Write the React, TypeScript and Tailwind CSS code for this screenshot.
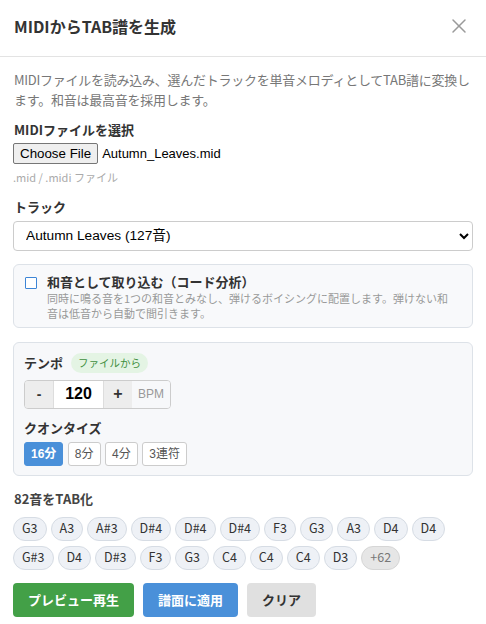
import React from "react";

const noto = { fontFamily: '"Noto Sans CJK JP", "Noto Sans", sans-serif' };
const arial = { fontFamily: '"Liberation Sans", Arial, "Noto Sans CJK JP", sans-serif' };

const notesRow = [
  "G3", "A3", "A#3", "D#4", "D#4", "D#4", "F3", "G3", "A3", "D4", "D4",
  "G#3", "D4", "D#3", "F3", "G3", "C4", "C4", "C4", "D3",
];

export default function App() {
  return (
    <div className="w-[486px] h-[624px] bg-white text-[#333] overflow-hidden" style={noto}>
      {/* Header */}
      <div className="h-[57px] border-b border-[#e3e3e3] flex items-start justify-between pl-[14px] pr-[15px] pt-[14px]">
        <div className="text-[16px] leading-[24px] font-bold text-[#333]">MIDIからTAB譜を生成</div>
        <svg width="24" height="24" viewBox="0 0 24 24" fill="none" stroke="#9a9a9a" strokeWidth="1.5" strokeLinecap="round">
          <path d="M18 6 6 18" />
          <path d="m6 6 12 12" />
        </svg>
      </div>

      {/* Body */}
      <div className="px-[13px] pt-[13px]">
        <p className="text-[13px] leading-[19.5px] tracking-[-0.25px] text-[#777] pl-[1px] mr-[-3px]">
          MIDIファイルを読み込み、選んだトラックを単音メロディとしてTAB譜に変換します。和音は最高音を採用します。
        </p>

        <div className="mt-[11px] text-[13px] leading-[19.5px] font-bold text-[#333] pl-[1px]">MIDIファイルを選択</div>
        <div className="mt-[3.5px] flex items-center h-[21px]" style={arial}>
          <span className="h-[21px] px-[6px] flex items-center border border-[#767676] bg-[#efefef] rounded-[2px] text-[13.33px] text-black">
            Choose File
          </span>
          <span className="ml-[4px] text-[13px] text-black">Autumn_Leaves.mid</span>
        </div>
        <div className="mt-[5px] text-[11px] leading-[16px] text-[#aaa]">.mid / .midi ファイル</div>

        <div className="mt-[12px] text-[13px] leading-[19.5px] font-bold text-[#333] pl-[1px]">トラック</div>
        <select
          className="mt-[4px] w-full h-[30px] border border-[#ccc] rounded-[4px] pl-[8px] pr-[6px] text-[13.7px] text-black bg-white"
          style={arial}
          defaultValue="a"
        >
          <option value="a">Autumn Leaves (127音)</option>
        </select>

        {/* Chord checkbox */}
        <div className="mt-[13px] h-[64px] border border-[#dde2e8] bg-[#f8f9fb] rounded-[6px] pl-[11px] pr-[16px] pt-[8px] flex gap-[10px]">
          <span className="mt-[4px] w-[12px] h-[12px] border border-[#3d85d6] bg-white shrink-0 rounded-[1px]" />
          <div className="flex-1">
            <div className="text-[13px] leading-[18px] font-bold text-[#333]">和音として取り込む（コード分析）</div>
            <div className="text-[11px] leading-[15px] text-[#999]">
              同時に鳴る音を1つの和音とみなし、弾けるボイシングに配置します。弾けない和音は低音から自動で間引きます。
            </div>
          </div>
        </div>

        {/* Tempo / quantize */}
        <div className="mt-[14px] h-[134px] border border-[#dde2e8] bg-[#f7f8fa] rounded-[6px] px-[10px] pt-[10px]">
          <div className="flex items-center gap-[8px] h-[20px]">
            <span className="text-[13px] font-bold text-[#333]">テンポ</span>
            <span className="h-[20px] px-[7px] rounded-full bg-[#e4f4e4] text-[#3f8f3f] text-[10.5px] flex items-center">ファイルから</span>
          </div>
          <div className="mt-[7px] flex w-[147px] h-[29px] border border-[#ccc] rounded-[4px] overflow-hidden" style={arial}>
            <span className="w-[29px] bg-[#ededed] flex items-center justify-center text-[14px] font-bold text-[#333] border-r border-[#ddd]">-</span>
            <span className="w-[49px] bg-white flex items-center justify-center text-[16px] font-bold text-black">120</span>
            <span className="w-[29px] bg-[#ededed] flex items-center justify-center text-[16px] font-bold text-[#333] border-l border-[#ddd]">+</span>
            <span className="flex-1 flex items-center justify-center text-[12px] text-[#999] bg-[#f7f8fa]">BPM</span>
          </div>
          <div className="mt-[9px] text-[13px] leading-[19.5px] font-bold text-[#333]">クオンタイズ</div>
          <div className="mt-[5px] flex gap-[4.5px]" style={arial}>
            <span className="h-[24px] px-[6px] flex items-center rounded-[3px] bg-[#4a90d9] border border-[#4a90d9] text-white text-[12px] font-bold">16分</span>
            <span className="h-[24px] px-[6px] flex items-center rounded-[3px] bg-white border border-[#ccc] text-[#555] text-[12px]">8分</span>
            <span className="h-[24px] px-[6px] flex items-center rounded-[3px] bg-white border border-[#ccc] text-[#555] text-[12px]">4分</span>
            <span className="h-[24px] px-[6px] flex items-center rounded-[3px] bg-white border border-[#ccc] text-[#555] text-[12px]">3連符</span>
          </div>
        </div>

        <div className="mt-[13px] text-[13px] leading-[19.5px] font-bold text-[#444] pl-[1px]">82音をTAB化</div>
        <div className="mt-[8.5px] flex flex-wrap gap-x-[4px] gap-y-[5px]">
          {notesRow.map((n, i) => (
            <span
              key={i}
              className="h-[24px] px-[8px] rounded-full bg-[#eef1f6] border border-[#d6dce4] text-[12.5px] text-[#333] flex items-center"
            >
              {n}
            </span>
          ))}
          <span className="h-[24px] px-[8px] rounded-full bg-[#e6e6e6] border border-[#d6d6d6] text-[12.5px] text-[#777] flex items-center">+62</span>
        </div>

        <div className="mt-[13px] flex gap-[9px]">
          <span className="h-[34px] px-[15px] rounded-[4px] bg-[#43a047] text-white text-[13px] font-bold flex items-center">プレビュー再生</span>
          <span className="h-[34px] px-[15px] rounded-[4px] bg-[#4a90d9] text-white text-[13px] font-bold flex items-center">譜面に適用</span>
          <span className="h-[34px] px-[15px] rounded-[4px] bg-[#e0e0e0] text-[#333] text-[13px] font-bold flex items-center">クリア</span>
        </div>
      </div>
    </div>
  );
}
